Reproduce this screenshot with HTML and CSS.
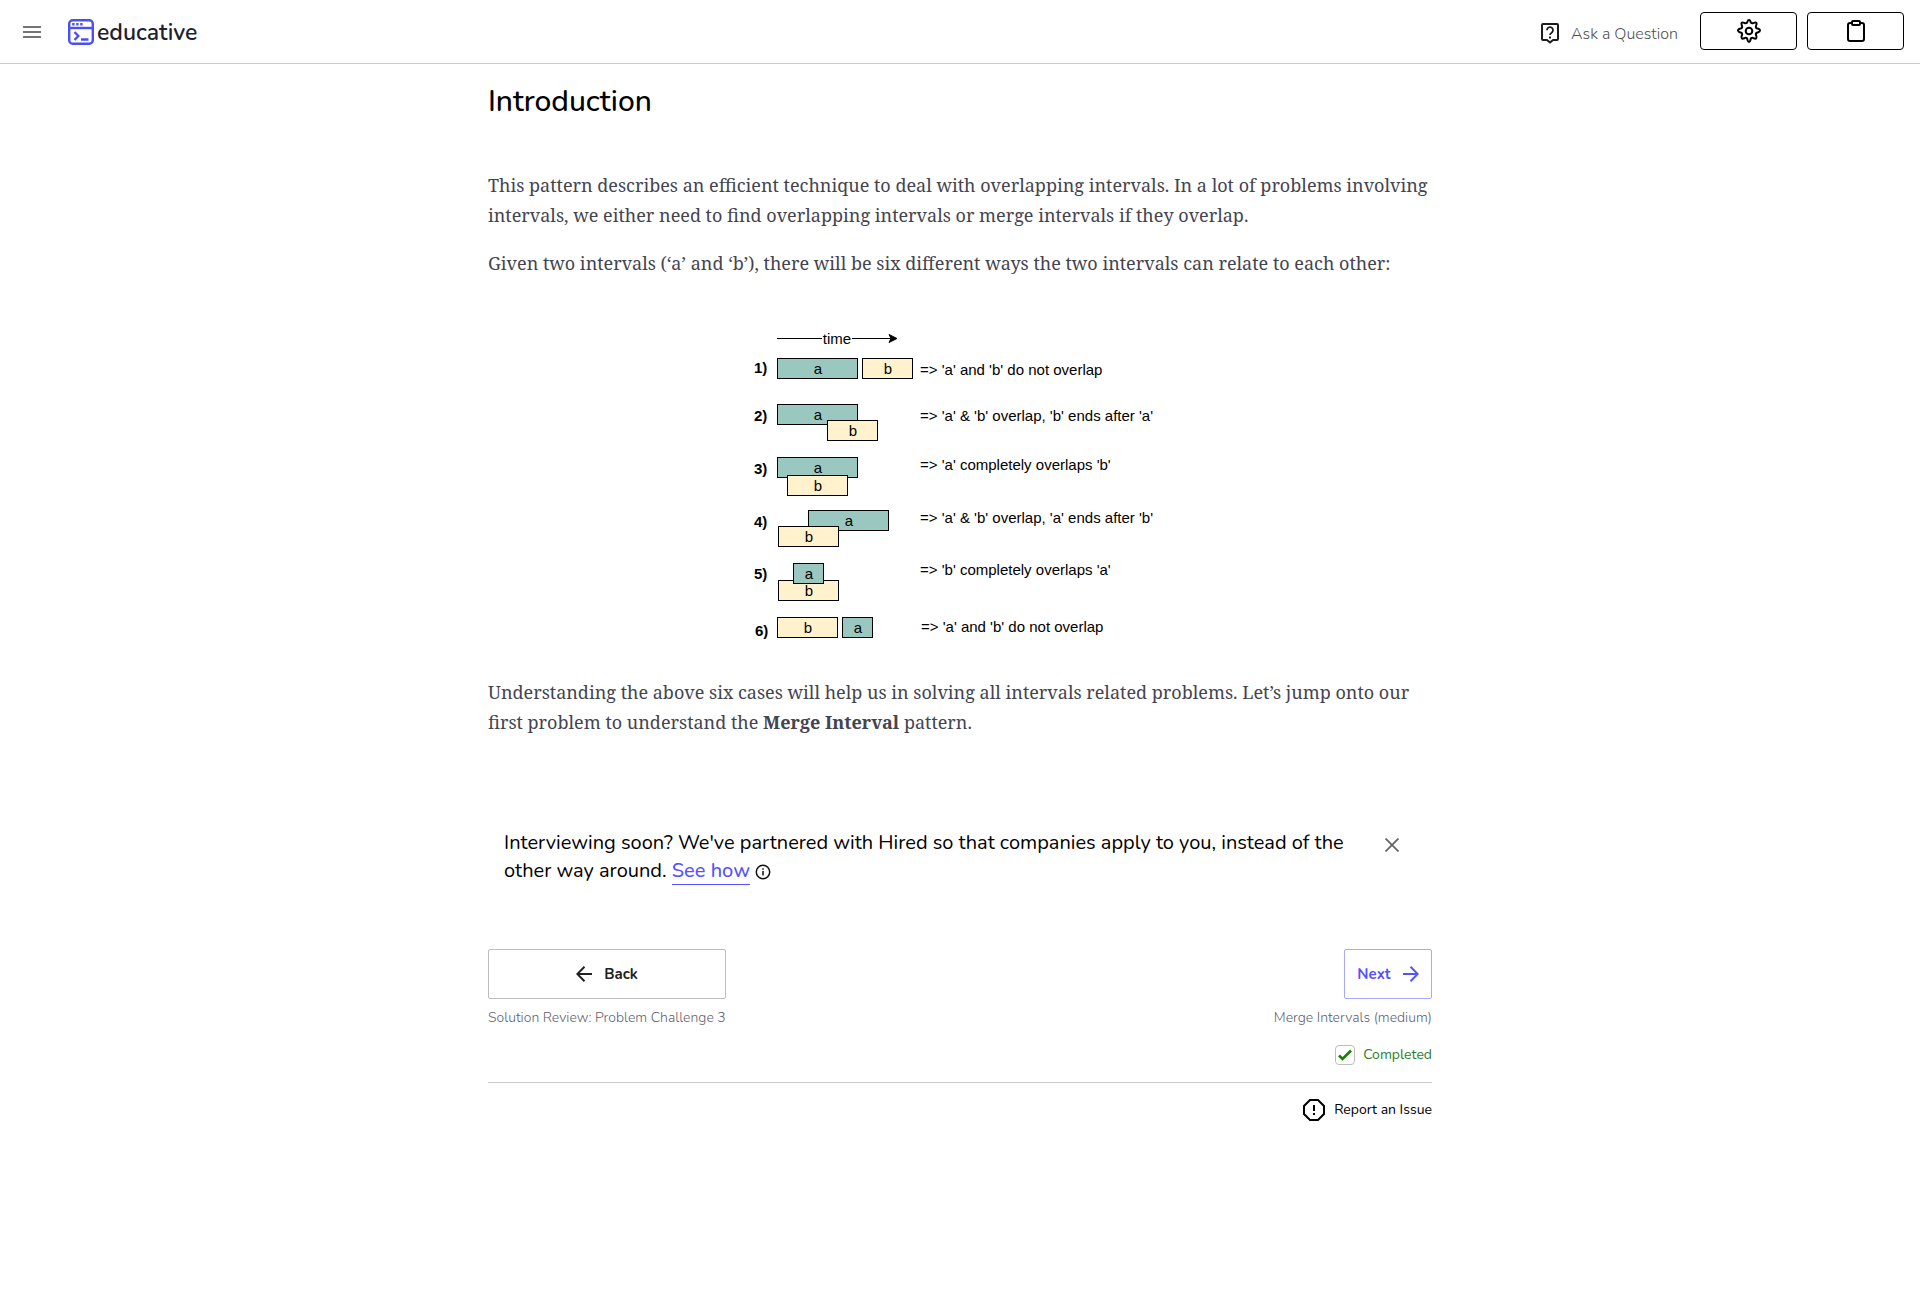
FILE: index.html
```html
<!DOCTYPE html>
<html lang="en">
<head>
<meta charset="utf-8">
<meta name="viewport" content="width=device-width, initial-scale=1">
<title>Introduction - Educative</title>
<link rel="stylesheet" href="styles.css">
</head>
<body>
<header class="topbar">
  <button class="menu-button" type="button" aria-label="Open menu">
    <svg width="18" height="12" viewBox="0 0 18 12" fill="#757575"><path d="M0 0h18v2H0zM0 5h18v2H0zM0 10h18v2H0z"/></svg>
  </button>
  <a class="brand" href="#">
    <svg width="26" height="26" viewBox="0 0 26 26" fill="none" stroke="#4951f5" stroke-width="2.400">
      <rect x="1.200" y="1.200" width="23.600" height="23.600" rx="3.500"/>
      <path d="M1 9h24"/>
      <path d="M4.200 5.300h2.400M8.200 5.300h2.400M12.200 5.300h2.400"/>
      <path d="M6.500 13l3.800 4-3.800 4M13 20.500h7.500"/>
    </svg>
    <span>educative</span>
  </a>
  <div class="topbar-actions">
    <a class="ask" href="#">
      <svg width="18" height="21" viewBox="0 0 18 21" fill="none" stroke="#1c1c1f" stroke-width="2">
        <path d="M2 1h14a1 1 0 0 1 1 1v14a1 1 0 0 1-1 1h-4l-3 2.500L6 17H2a1 1 0 0 1-1-1V2a1 1 0 0 1 1-1z" stroke-linejoin="round"/>
        <path d="M6 7.200a3 3 0 1 1 4.600 2.500C9.500 10.400 9 10.900 9 12" stroke-width="1.800"/>
        <path d="M9 13.400v2" stroke-width="2"/>
      </svg>
      <span>Ask a Question</span>
    </a>
    <button class="tool-button" type="button" aria-label="Settings">
      <svg width="24" height="24" viewBox="0 0 24 24" fill="none" stroke="#000" stroke-width="2" stroke-linejoin="round">
        <path d="M10 3.800C10.600 2.600 10.600 1 12 1s1.400 1.600 2 2.800c.6.500 1.200.6 1.900.4 1.200-.4 2.500-1.300 3.400-.4s0 2.200-.4 3.400c-.2.700-.1 1.300.4 1.900 1.200.6 3.700.6 3.700 2.400s-2.500 1.800-3.700 2.500c-.5.600-.6 1.200-.4 1.900.4 1.200 1.300 2.500.4 3.400s-2.200 0-3.400-.4c-.7-.2-1.300-.1-1.900.4-.6 1.200-.6 3.700-2 3.700s-1.400-2.500-2-3.700c-.6-.5-1.200-.6-1.900-.4-1.200.4-2.500 1.300-3.400.4s0-2.200.4-3.400c.2-.7.100-1.300-.4-1.900C3.500 13.300 1 13.300 1 11.500s2.500-1.800 3.700-2.400c.5-.6.600-1.200.4-1.900-.4-1.200-1.300-2.500-.4-3.400s2.200 0 3.400.4c.7.200 1.300.1 1.900-.4z"/>
        <circle cx="12" cy="12" r="3.300"/>
      </svg>
    </button>
    <button class="tool-button" type="button" aria-label="Notes">
      <svg width="18" height="22" viewBox="0 0 18 22" fill="none" stroke="#000" stroke-width="2">
        <path d="M5 3H3a2 2 0 0 0-2 2v14a2 2 0 0 0 2 2h12a2 2 0 0 0 2-2V5a2 2 0 0 0-2-2h-2"/>
        <rect x="5" y="1" width="8" height="4" rx="1"/>
      </svg>
    </button>
  </div>
</header>

<main class="lesson">
  <h1>Introduction</h1>
  <div class="prose">
    <p>This pattern describes an efficient technique to deal with overlapping intervals. In a lot of problems involving intervals, we either need to find overlapping intervals or merge intervals if they overlap.</p>
    <p>Given two intervals (‘a’ and ‘b’), there will be six different ways the two intervals can relate to each other:</p>
  </div>

  <figure class="diagram">
    <svg width="420" height="324" viewBox="0 0 420 324" role="img" aria-label="Six ways two intervals can relate">
      <g class="arrow">
        <path d="M27 13.500H72M102 13.500H141"/>
        <path class="arrow-head" d="M147 13.500l-8-4 2 4-2 4z"/>
      </g>
      <g class="boxes">
        <rect class="box-a" x="27.500" y="33.500" width="80" height="20"/>
        <rect class="box-b" x="112.500" y="33.500" width="50" height="20"/>
        <rect class="box-a" x="27.500" y="79.500" width="80" height="20"/>
        <rect class="box-b" x="77.500" y="95.500" width="50" height="20"/>
        <rect class="box-a" x="27.500" y="132.500" width="80" height="20"/>
        <rect class="box-b" x="37.500" y="150.500" width="60" height="20"/>
        <rect class="box-a" x="58.500" y="185.500" width="80" height="20"/>
        <rect class="box-b" x="28.500" y="201.500" width="60" height="20"/>
        <rect class="box-b" x="28.500" y="255.500" width="60" height="20"/>
        <rect class="box-a" x="43.500" y="238.500" width="30" height="20"/>
        <rect class="box-b" x="27.500" y="292.500" width="60" height="20"/>
        <rect class="box-a" x="92.500" y="292.500" width="30" height="20"/>
      </g>
      <g class="names">
        <text x="87" y="19">time</text>
        <text x="68" y="49">a</text><text x="138" y="49">b</text>
        <text x="68" y="95">a</text><text x="103" y="111">b</text>
        <text x="68" y="148">a</text><text x="68" y="166">b</text>
        <text x="99" y="201">a</text><text x="59" y="217">b</text>
        <text x="59" y="254">a</text><text x="59" y="271">b</text>
        <text x="58" y="308">b</text><text x="108" y="308">a</text>
      </g>
      <g class="numbers">
        <text x="4" y="48">1)</text>
        <text x="4" y="96">2)</text>
        <text x="4" y="149">3)</text>
        <text x="4" y="202">4)</text>
        <text x="4" y="254">5)</text>
        <text x="5" y="311">6)</text>
      </g>
      <g class="notes">
        <text x="170" y="50">=&gt; 'a' and 'b' do not overlap</text>
        <text x="170" y="96">=&gt; 'a' &amp; 'b' overlap, 'b' ends after 'a'</text>
        <text x="170" y="145">=&gt; 'a' completely overlaps 'b'</text>
        <text x="170" y="198">=&gt; 'a' &amp; 'b' overlap, 'a' ends after 'b'</text>
        <text x="170" y="250">=&gt; 'b' completely overlaps 'a'</text>
        <text x="171" y="307">=&gt; 'a' and 'b' do not overlap</text>
      </g>
    </svg>
  </figure>

  <div class="prose">
    <p>Understanding the above six cases will help us in solving all intervals related problems. Let’s jump onto our first problem to understand the <strong>Merge Interval</strong> pattern.</p>
  </div>

  <aside class="promo">
    <p>Interviewing soon? We've partnered with Hired so that companies apply to you, instead of the other way around. <a href="#">See how</a>
      <svg class="info" width="16" height="16" viewBox="0 0 16 16" fill="none" stroke="#111" stroke-width="1.500"><circle cx="8" cy="8" r="6.700"/><path d="M8 7v4.500M8 4.300v1.500"/></svg>
    </p>
    <button class="close" type="button" aria-label="Dismiss">
      <svg width="14" height="14" viewBox="0 0 14 14" fill="none" stroke="#666" stroke-width="1.800"><path d="M.5.500l13 13M13.500.500l-13 13"/></svg>
    </button>
  </aside>

  <nav class="pager" aria-label="Lessons">
    <div class="pager-side">
      <button class="nav-button" type="button">
        <svg width="16" height="16" viewBox="0 0 16 16" fill="none" stroke="currentColor" stroke-width="2"><path d="M16 8H1.500M8.500.800L1.300 8l7.200 7.200"/></svg>
        <span>Back</span>
      </button>
      <span class="caption">Solution Review: Problem Challenge 3</span>
    </div>
    <div class="pager-side pager-next">
      <button class="nav-button nav-next" type="button">
        <span>Next</span>
        <svg width="16" height="16" viewBox="0 0 16 16" fill="none" stroke="currentColor" stroke-width="2"><path d="M0 8h14.500M7.500.800L14.700 8l-7.200 7.200"/></svg>
      </button>
      <span class="caption">Merge Intervals (medium)</span>
    </div>
  </nav>

  <div class="status">
    <label class="completed">
      <span class="tick">
        <input type="checkbox" checked>
        <svg width="20" height="20" viewBox="0 0 20 20" fill="none" stroke="#178000" stroke-width="2.600"><path d="M4 10.500l3.500 3.500L16 5.500"/></svg>
      </span>
      <span>Completed</span>
    </label>
  </div>

  <footer class="report-row">
    <a class="report" href="#">
      <svg width="22" height="22" viewBox="0 0 22 22" fill="none" stroke="#000" stroke-width="2"><path d="M7 1h8l6 6v8l-6 6H7l-6-6V7z"/><path d="M11 6v6M11 14v2"/></svg>
      <span>Report an Issue</span>
    </a>
  </footer>
</main>
</body>
</html>
```
FILE: styles.css
```css
* { box-sizing: border-box; }

body {
  margin: 0;
  background: #fff;
  color: #000;
  font-family: Nunito, "Nunito Sans", Lato, sans-serif;
}

button {
  padding: 0;
  border: 0;
  background: none;
  color: inherit;
  font: inherit;
  cursor: pointer;
}

a { color: inherit; text-decoration: none; }
svg { display: block; flex: none; }
h1, p, figure { margin: 0; }

.topbar {
  display: flex;
  align-items: center;
  height: 64px;
  padding: 0 16px 0 23px;
  border-bottom: 1px solid #ccc;
}

.menu-button { margin-right: 27px; }

.brand {
  display: flex;
  align-items: center;
  gap: 3px;
  color: #1f1f32;
  font-size: 23px;
  font-weight: 600;
  line-height: 26px;
}

.brand span { padding-top: 2px; }

.topbar-actions {
  display: flex;
  align-items: center;
  gap: 10px;
  margin: 0 0 2px auto;
}

.ask {
  display: flex;
  align-items: center;
  gap: 12px;
  margin: 6px 12px 0 0;
  color: #505050;
  font-size: 16px;
  font-weight: 300;
}

.tool-button {
  display: grid;
  place-items: center;
  width: 97px;
  height: 38px;
  border: 1px solid #000;
  border-radius: 4px;
}

.lesson {
  max-width: 976px;
  margin: 0 auto;
  padding: 18px 16px 48px;
}

h1 {
  margin-bottom: 48px;
  font-size: 30px;
  font-weight: 500;
  line-height: 40px;
}

.prose {
  display: flex;
  flex-direction: column;
  gap: 18px;
  color: #44444f;
  font-family: "Noto Serif", "Droid Serif", "Liberation Serif", serif;
  font-size: 18px;
  line-height: 30px;
}

.diagram {
  display: flex;
  justify-content: center;
  margin: 47px 0 28px;
}

.diagram text {
  font-family: "Liberation Sans", Arial, sans-serif;
  font-size: 15px;
}

.names text { text-anchor: middle; }
.numbers text { font-weight: 700; }
.boxes rect { stroke: #000; }
.boxes .box-a { fill: #9ac7bf; }
.boxes .box-b { fill: #fff2cc; }
.arrow path { stroke: #000; }
.arrow .arrow-head { fill: #000; }

.promo {
  display: flex;
  justify-content: space-between;
  align-items: flex-start;
  gap: 32px;
  margin-top: 92px;
  padding: 0 33px 0 16px;
  font-size: 20px;
  line-height: 28px;
}

.promo a {
  border-bottom: 1px solid #5553ff;
  color: #5553ff;
  font-weight: 500;
}

.info { display: inline-block; vertical-align: -3px; }
.close { margin-top: 9px; }

.pager {
  display: flex;
  justify-content: space-between;
  margin-top: 64px;
}

.pager-side { display: flex; flex-direction: column; }
.pager-next { align-items: flex-end; }

.nav-button {
  display: flex;
  align-items: center;
  justify-content: center;
  gap: 12px;
  min-width: 238px;
  height: 50px;
  border: 1px solid #bdbdbd;
  border-radius: 2px;
  color: #212121;
  font-size: 15px;
  font-weight: 700;
}

.nav-next {
  min-width: 88px;
  border-color: #a9a8ff;
  color: #5553ff;
}

.caption {
  margin-top: 9px;
  color: #5f5f6b;
  font-size: 14px;
  font-weight: 300;
  line-height: 20px;
}

.status {
  display: flex;
  justify-content: flex-end;
  padding: 17px 0;
  border-bottom: 1px solid #ccc;
}

.completed {
  display: flex;
  align-items: center;
  gap: 8px;
  color: #2b7d2b;
  font-size: 14px;
  line-height: 20px;
}

.tick { display: grid; }
.tick > * { grid-area: 1 / 1; }

.tick input {
  width: 20px;
  height: 20px;
  margin: 0;
  border: 1px solid #bdbdbd;
  border-radius: 4px;
  appearance: none;
}

.tick svg { pointer-events: none; }

.report-row {
  display: flex;
  justify-content: flex-end;
  padding-top: 16px;
}

.report {
  display: flex;
  align-items: center;
  gap: 9px;
  font-size: 14px;
  line-height: 22px;
}
```
